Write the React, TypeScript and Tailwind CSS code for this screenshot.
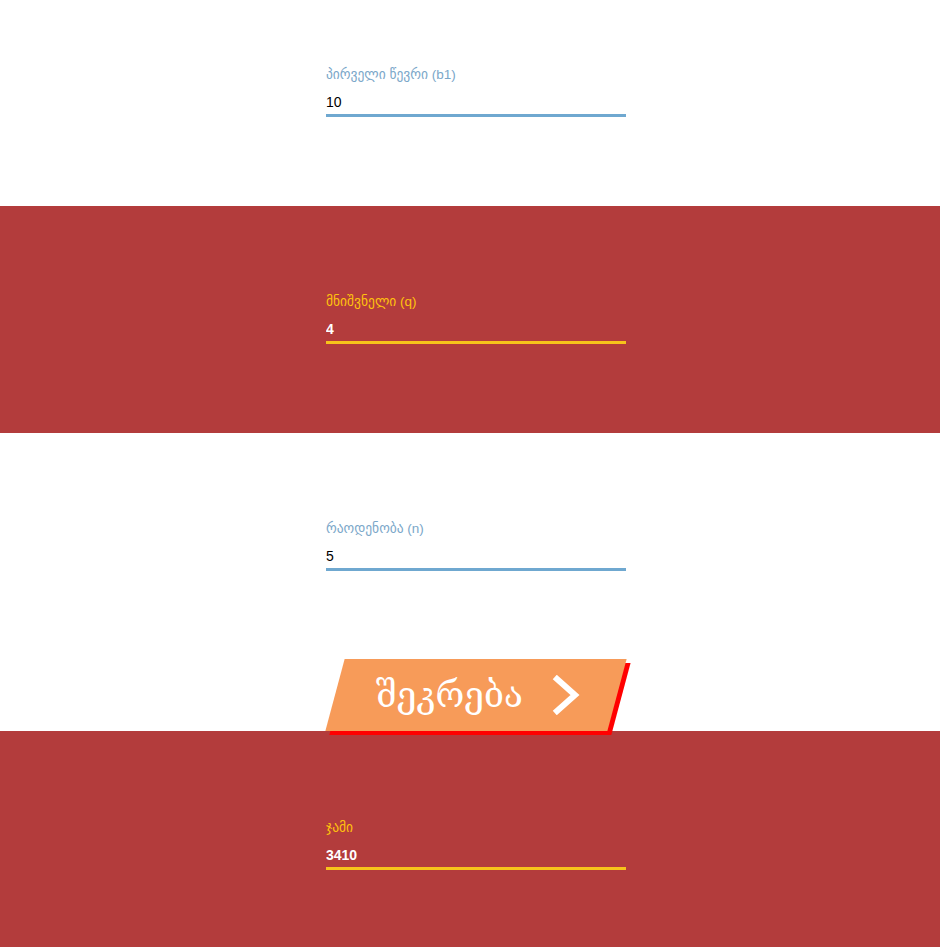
import React, { useState } from "react";

interface FieldProps {
    label: string;
    value: string;
    dark?: boolean;
    onChange?: (v: string) => void;
}

const Field: React.FC<FieldProps> = ({ label, value, dark, onChange }) => {
    return (
        <div className="mx-auto w-[312px] pl-[12px]">
            <label
                className={`block text-[13.5px] leading-[16px] ${dark ? "text-[#ffc20e]" : "text-[#7ba7c9]"}`}
            >
                {label}
            </label>
            <input
                value={value}
                readOnly={!onChange}
                onChange={(e) => onChange && onChange(e.target.value)}
                className={`mt-[10px] block h-[24px] w-[300px] border-b-[3px] bg-transparent pb-[3px] text-[14px] leading-[16px] outline-none ${
                    dark ? "border-[#f7c31b] font-bold text-white" : "border-[#6fa8d0] text-black"
                }`}
            />
        </div>
    );
};

export default function App() {
    const [b1, setB1] = useState("10");
    const [q, setQ] = useState("4");
    const [n, setN] = useState("5");
    const [sum, setSum] = useState("3410");

    const calc = () => {
        const a = parseFloat(b1);
        const r = parseFloat(q);
        const k = parseInt(n);
        if (isNaN(a) || isNaN(r) || isNaN(k)) return;
        const s = r === 1 ? a * k : (a * (Math.pow(r, k) - 1)) / (r - 1);
        setSum(String(s));
    };

    return (
        <div className="min-h-[947px] w-full font-['Liberation_Sans','DejaVu_Sans',sans-serif]">
            <section className="h-[206px] bg-white pt-[67px]">
                <Field label="პირველი წევრი (b1)" value={b1} onChange={setB1} />
            </section>
            <section className="h-[227px] bg-[#b33c3c] pt-[88px]">
                <Field label="მნიშვნელი (q)" value={q} dark onChange={setQ} />
            </section>
            <section className="relative z-10 h-[298px] bg-white pt-[88px]">
                <Field label="რაოდენობა (n)" value={n} onChange={setN} />
                <div className="mx-auto mt-[88px] w-[312px] pl-[12px]">
                    <button
                        onClick={calc}
                        className="ml-[9px] flex h-[72px] w-[282px] -skew-x-[15deg] items-center justify-center bg-[#f79b59] shadow-[5px_4px_0_#ff0000]"
                    >
                        <span className="flex skew-x-[15deg] items-center gap-[28px] pl-[4px]">
                            <span className="font-['DejaVu_Serif',serif] text-[35px] leading-none text-white">
                                შეკრება
                            </span>
                            <svg width="30" height="40" viewBox="0 0 30 40" fill="none">
                                <path
                                    d="M6 4 L24 20 L6 36"
                                    stroke="#ffffff"
                                    strokeWidth="6"
                                    strokeLinecap="square"
                                    strokeLinejoin="miter"
                                />
                            </svg>
                        </span>
                    </button>
                </div>
            </section>
            <section className="h-[216px] bg-[#b33c3c] pt-[89px]">
                <Field label="ჯამი" value={sum} dark />
            </section>
        </div>
    );
}
